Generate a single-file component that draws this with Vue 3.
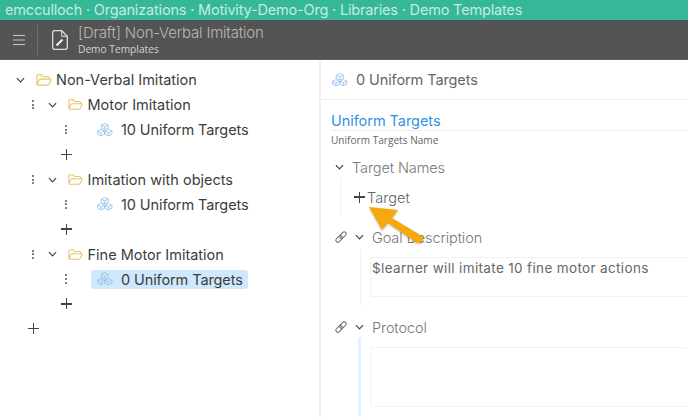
<template>
  <div class="page">
    <div class="crumbs">emcculloch · Organizations · Motivity-Demo-Org · Libraries · Demo Templates</div>
    <header class="topbar">
      <svg class="menu" viewBox="0 0 14 12" width="14" height="12">
        <path d="M1 1.5h12M1 6h12M1 10.5h12" stroke="#c4c4c4" stroke-width="1.2" fill="none" />
      </svg>
      <span class="topbar-sep"></span>
      <svg class="doc" viewBox="0 0 16 20" width="16" height="20" fill="none" stroke="#dedede">
        <path d="M2.5 .7h7.2l5.6 5.6v11a2 2 0 0 1-2 2H2.500a1.800 1.800 0 0 1-1.800-1.800V2.500A1.800 1.800 0 0 1 2.500 .7z" stroke-width="1.300" />
        <path d="M9.700 .7v5.600h5.600" stroke-width="1" />
        <path d="M4.500 15.500l6-6" stroke="#f2f2f2" stroke-width="2" />
      </svg>
      <div class="topbar-text">
        <div class="topbar-title">[Draft] Non-Verbal Imitation</div>
        <div class="topbar-sub">Demo Templates</div>
      </div>
    </header>

    <main class="columns">
      <section class="tree">
        <div class="row row-root">
          <svg class="chev" viewBox="0 0 10 6" width="9" height="6"><path d="M1 1l4 4 4-4" /></svg>
          <svg class="folder" viewBox="0 0 17 13" preserveAspectRatio="none"><path :d="folderPath" /></svg>
          <span class="label">Non-Verbal Imitation</span>
        </div>

        <template v-for="group in groups" :key="group.name">
          <div class="row row-group">
            <span class="dots"><i></i><i></i><i></i></span>
            <svg class="chev" viewBox="0 0 10 6" width="9" height="6"><path d="M1 1l4 4 4-4" /></svg>
            <svg class="folder" viewBox="0 0 17 13" preserveAspectRatio="none"><path :d="folderPath" /></svg>
            <span class="label">{{ group.name }}</span>
          </div>
          <div class="row row-leaf">
            <span class="dots"><i></i><i></i><i></i></span>
            <div class="leaf" :class="{ 'leaf-active': group.active }">
              <svg class="cubes" viewBox="0 0 16 14" width="16" height="14">
                <path v-for="c in cubes" :key="c" :d="c" />
              </svg>
              <span class="label">{{ group.leaf }}</span>
            </div>
          </div>
          <div class="row row-add-leaf"><span class="plus"></span></div>
        </template>

        <div class="row row-add-group"><span class="plus"></span></div>
      </section>

      <section class="detail">
        <div class="detail-head">
          <svg class="cubes" viewBox="0 0 16 14" width="16" height="14">
            <path v-for="c in cubes" :key="c" :d="c" />
          </svg>
          <span>0 Uniform Targets</span>
        </div>

        <div class="detail-body">
          <h2 class="section-title">Uniform Targets</h2>
          <div class="section-sub">Uniform Targets Name</div>

          <div class="field-head field-head-plain">
            <svg class="chev" viewBox="0 0 10 6" width="9" height="6"><path d="M1 1l4 4 4-4" /></svg>
            <span>Target Names</span>
          </div>
          <div class="target-box">
            <span class="plus plus-dark"></span>
            <span class="target-label">Target</span>
          </div>

          <div class="field-head">
            <svg class="link" viewBox="0 0 12 12" width="12" height="12">
              <g transform="rotate(-45 6 6)">
                <rect x="-0.500" y="4" width="7.500" height="4" rx="2" />
                <rect x="5" y="4" width="7.500" height="4" rx="2" />
              </g>
            </svg>
            <svg class="chev" viewBox="0 0 10 6" width="9" height="6"><path d="M1 1l4 4 4-4" /></svg>
            <span>Goal Description</span>
          </div>
          <div class="field-wrap">
            <div class="field-input goal">$learner will imitate 10 fine motor actions</div>
          </div>

          <div class="field-head">
            <svg class="link" viewBox="0 0 12 12" width="12" height="12">
              <g transform="rotate(-45 6 6)">
                <rect x="-0.500" y="4" width="7.500" height="4" rx="2" />
                <rect x="5" y="4" width="7.500" height="4" rx="2" />
              </g>
            </svg>
            <svg class="chev" viewBox="0 0 10 6" width="9" height="6"><path d="M1 1l4 4 4-4" /></svg>
            <span>Protocol</span>
          </div>
          <div class="field-wrap field-wrap-focus">
            <div class="field-input protocol"></div>
          </div>
        </div>
      </section>
    </main>

    <svg class="arrow" viewBox="0 0 70 50" width="70" height="50">
      <path d="M9 7L38 10L32 18L62 36Q64.500 38 62.500 41Q60 44 56 42.500L28 23L22 30Z" fill="#f6a80e" />
    </svg>
  </div>
</template>

<script setup>
const folderPath =
  'M1 11.500V2.200C1 1.500 1.500 1 2.200 1h3.600l1.700 2h5.600c.7 0 1.200 .5 1.200 1.200V5.500M1 11.500c.2 .4 .5 .6 1 .6h10.400c.5 0 .9 -.2 1.100 -.7L16 6.600c.2 -.6 -.2 -1.100 -.8 -1.100H4.600c-.5 0 -.9 .3 -1.100 .7L1 11.500z'

const hex = (x, y) =>
  `M${x} ${y + 1.7}l3.500 -1.700l3.500 1.700v3l-3.500 1.700l-3.500 -1.700zM${x} ${y + 1.7}l3.500 1.700l3.500 -1.700M${x + 3.5} ${y + 3.4}v3`
const cubes = [hex(4.25, 0.5), hex(0.5, 6.5), hex(8, 6.5)]

const groups = [
  { name: 'Motor Imitation', leaf: '10 Uniform Targets' },
  { name: 'Imitation with objects', leaf: '10 Uniform Targets' },
  { name: 'Fine Motor Imitation', leaf: '0 Uniform Targets', active: true },
]
</script>

<style>
html,
body {
  margin: 0;
  background: #fff;
  overflow: hidden;
}
</style>

<style scoped>
.page {
  position: relative;
  width: 688px;
  height: 417px;
  overflow: hidden;
  font-family: Inter, "Liberation Sans", sans-serif;
  color: #444;
}

.crumbs {
  height: 20px;
  background: #36b898;
  color: #c5ebdf;
  font-size: 14.5px;
  line-height: 20px;
  padding-left: 5px;
  white-space: nowrap;
  letter-spacing: -0.18px;
}

.topbar {
  height: 40px;
  background: #545454;
  display: flex;
  align-items: center;
  box-sizing: border-box;
  border-bottom: 1px solid #666;
}

.menu {
  margin-left: 12px;
}

.topbar-sep {
  width: 1px;
  height: 30px;
  background: #6e6e6e;
  margin-left: 11px;
}

.doc {
  margin-left: 14px;
}

.topbar-text {
  margin-left: 10px;
}

.topbar-title {
  font-size: 15px;
  line-height: 18px;
  margin-top: 1px;
  color: #b8b8b8;
  font-weight: 300;
  letter-spacing: -0.2px;
}

.topbar-sub {
  font-family: "Open Sans", sans-serif;
  font-size: 10.2px;
  line-height: 13px;
  color: #d2d2d2;
  margin-top: 1px;
}

.columns {
  display: flex;
  height: 357px;
}

.tree {
  width: 319px;
  flex-shrink: 0;
  padding-top: 7.5px;
  border-right: 2px solid #f1f1f1;
  box-sizing: content-box;
}

.row {
  height: 24.9px;
  display: flex;
  align-items: center;
  font-size: 14.5px;
  color: #3c3c3c;
  white-space: nowrap;
}

.row-root {
  padding-left: 16px;
}

.row-group {
  padding-left: 32px;
}

.row-leaf {
  padding-left: 65px;
}

.row-add-leaf {
  padding-left: 61px;
}

.row-add-group {
  padding-left: 28px;
}

.chev {
  fill: none;
  stroke: #444;
  stroke-width: 1.3;
  flex-shrink: 0;
}

.folder {
  width: 16px;
  height: 12px;
  fill: none;
  stroke: #e7c46a;
  stroke-width: 1.2;
  margin-left: 11px;
  margin-right: 4px;
  flex-shrink: 0;
}

.row-group .chev {
  margin-left: 13.500px;
}

.row-group .folder {
  width: 15px;
  height: 11px;
  margin-left: 11.500px;
  margin-right: 4.500px;
}

.dots {
  display: flex;
  flex-direction: column;
  gap: 1.6px;
  width: 2px;
  flex-shrink: 0;
}

.dots i {
  display: block;
  width: 2px;
  height: 2px;
  background: #555;
  border-radius: 50%;
}

.leaf {
  display: flex;
  align-items: center;
  margin-left: 24px;
  height: 19px;
  padding: 0 1px 0 6px;
  width: 150px;
  border-radius: 3px;
  letter-spacing: -0.1px;
}

.leaf-active {
  background: #cfe8fc;
}

.cubes {
  fill: none;
  stroke: #9cc4ec;
  stroke-width: 0.9;
  flex-shrink: 0;
}

.leaf .cubes {
  margin-right: 8px;
}

.plus {
  position: relative;
  display: block;
  width: 11px;
  height: 11px;
}

.plus::before,
.plus::after {
  content: "";
  position: absolute;
  background: #444;
}

.plus::before {
  left: 0;
  right: 0;
  top: 4.6px;
  height: 1.5px;
}

.plus::after {
  top: 0;
  bottom: 0;
  left: 4.6px;
  width: 1.5px;
}

.detail {
  flex: 1;
  min-width: 0;
}

.detail-head {
  height: 40px;
  box-sizing: border-box;
  border-bottom: 1px solid #efefef;
  display: flex;
  align-items: center;
  gap: 8px;
  padding-left: 11px;
  font-size: 14.5px;
  font-weight: 400;
  color: #666;
  letter-spacing: -0.1px;
}

.detail-body {
  padding-left: 10px;
}

.section-title {
  margin: 0;
  height: 31px;
  box-sizing: border-box;
  padding-top: 11px;
  border-bottom: 1px solid #eee;
  font-size: 14.5px;
  line-height: 19px;
  font-weight: 400;
  color: #3093e6;
  letter-spacing: -0.05px;
}

.section-sub {
  font-family: "Open Sans", sans-serif;
  font-size: 10.1px;
  line-height: 18px;
  color: #666;
  margin-bottom: 8px;
}

.field-head {
  height: 20px;
  display: flex;
  align-items: center;
  font-size: 14.5px;
  font-weight: 300;
  color: #777;
  letter-spacing: -0.1px;
}

.field-head .link {
  fill: none;
  stroke: #666;
  stroke-width: 1;
  flex-shrink: 0;
  margin-left: 4px;
  overflow: visible;
}

.field-head .chev {
  margin-left: 7.500px;
  margin-right: 8.500px;
}

.field-head-plain .chev {
  margin-left: 4px;
  margin-right: 8px;
}

.target-box {
  height: 40px;
  width: 70px;
  box-sizing: border-box;
  margin-left: 9px;
  margin-bottom: 10px;
  border-left: 1px solid #f2f2f2;
  border-radius: 3px;
  display: flex;
  align-items: center;
  padding-left: 13px;
}

.plus-dark {
  flex-shrink: 0;
}

.target-label {
  margin-left: 2px;
  font-size: 14.5px;
  font-weight: 300;
  color: #666;
  letter-spacing: 0.05px;
}

.field-wrap {
  margin-left: 29px;
  padding: 10px 0 10px 9px;
  border-left: 1px solid #f2f2f2;
  border-radius: 3px;
  margin-bottom: 10px;
}

.field-wrap-focus {
  margin-left: 27px;
  border-left: 3px solid #e6f2fd;
  padding-left: 9px;
  height: 80px;
  box-sizing: content-box;
}

.field-input {
  border: 1px solid #f2f2f2;
  border-right: none;
  border-radius: 3px;
  box-sizing: border-box;
}

.goal {
  height: 40px;
  padding-top: 1px;
  padding-left: 1px;
  font-size: 13.5px;
  line-height: 18px;
  color: #666;
  letter-spacing: 0.35px;
  white-space: nowrap;
}

.protocol {
  height: 60px;
}

.arrow {
  position: absolute;
  left: 360px;
  top: 200px;
  filter: drop-shadow(0 1px 1px rgba(0, 0, 0, 0.25));
}
</style>
